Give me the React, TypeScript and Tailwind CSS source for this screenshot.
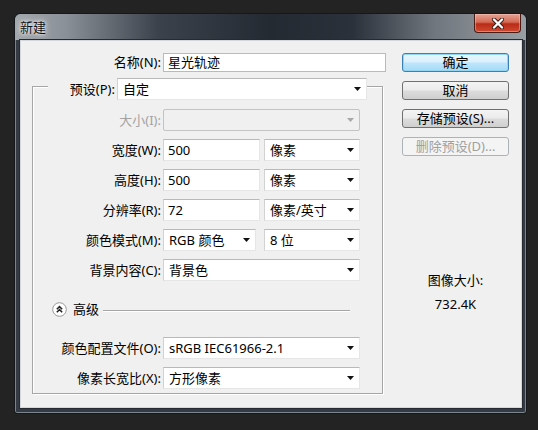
import React from 'react';

function Arrow({ disabled = false }: { disabled?: boolean }) {
  return (
    <svg width="7" height="4" viewBox="0 0 7 4" className="shrink-0">
      <polygon points="0,0 7,0 3.5,4" fill={disabled ? '#a8a8a8' : '#111111'} />
    </svg>
  );
}

function Select({ value, className = '', disabled = false }: { value?: string; className?: string; disabled?: boolean }) {
  return (
    <div
      className={`flex items-center justify-between h-[22px] pl-[5px] pr-[5px] border ${
        disabled
          ? 'bg-[#f0f0f0] border-[#c3c3c3] rounded-[2px]'
          : 'bg-white border-[#e6e6e6] border-t-[#b9b9b9] border-l-[#d2d2d2]'
      } ${className}`}
    >
      <span className="leading-[20px] whitespace-nowrap">{value}</span>
      <Arrow disabled={disabled} />
    </div>
  );
}

function Field({ value, className = '' }: { value: string; className?: string }) {
  return (
    <div className={`flex items-center h-[22px] pl-[4px] bg-white border border-[#e6e6e6] border-t-[#b9b9b9] border-l-[#d2d2d2] ${className}`}>
      <span className="leading-[20px]">{value}</span>
    </div>
  );
}

function Row({ label, children, disabled = false }: { label: string; children: React.ReactNode; disabled?: boolean }) {
  return (
    <div className="flex items-center h-[22px]">
      <div className={`w-[128px] shrink-0 text-right whitespace-nowrap leading-[22px] ${disabled ? 'text-[#a3a3a3]' : ''}`}>
        {label}
      </div>
      <div className="ml-[2px] flex items-center">{children}</div>
    </div>
  );
}

function Button({ label, primary = false, disabled = false }: { label: string; primary?: boolean; disabled?: boolean }) {
  let cls =
    'border-[#707070] bg-[linear-gradient(to_bottom,#f4f4f4_0%,#ebebeb_48%,#dcdcdc_52%,#cfcfcf_100%)] text-black';
  if (primary)
    cls =
      'border-[#3c7fb1] bg-[linear-gradient(to_bottom,#eaf6fd_0%,#d9f0fc_48%,#bee6fd_52%,#a7d9f5_100%)] text-black shadow-[inset_0_0_0_1px_#8fd6f7]';
  if (disabled) cls = 'border-[#adb2b5] bg-[#f4f4f4] text-[#a0a0a0]';
  return (
    <div className={`h-[19px] w-[107px] rounded-[3px] border flex items-center justify-center leading-[17px] ${cls}`}>
      {label}
    </div>
  );
}

function CollapseIcon() {
  return (
    <svg width="15" height="15" viewBox="0 0 15 15" className="shrink-0">
      <circle cx="7.5" cy="7.5" r="6.8" fill="#ffffff" stroke="#9a9a9a" strokeWidth="1" />
      <path d="M4.8 7.2 L7.5 4.6 L10.2 7.2 M4.8 10.2 L7.5 7.6 L10.2 10.2" fill="none" stroke="#222" strokeWidth="1.5" />
    </svg>
  );
}

export default function App() {
  return (
    <div className="w-[538px] h-[430px] bg-[#232323] overflow-hidden pt-[13px] pl-[14px] font-['Noto_Sans','Noto_Sans_CJK_SC',sans-serif] text-[13px] text-black">
      {/* Window */}
      <div className="w-[513px] h-[401px] flex flex-col rounded-t-[6px] rounded-b-[3px] border border-[#15181b] bg-[#343b44] shadow-[inset_0_0_0_1px_#7d858d]">
        {/* Title bar */}
        <div className="h-[26px] flex items-start justify-between rounded-t-[6px] bg-[linear-gradient(to_right,#a3a8ad_0%,#8a9097_10%,#3b424b_28%,#232a32_50%,#2a313a_66%,#6f767d_82%,#9a9fa4_100%)]">
          <div className="pl-[5px] pt-[4px] leading-[18px] text-[#111] [text-shadow:0_0_6px_#ffffff,0_0_3px_#ffffff]">新建</div>
          <div className="mr-[5px] w-[47px] h-[19px] rounded-b-[4px] border border-t-0 border-[#4a1c16] bg-[linear-gradient(to_bottom,#e6a496_0%,#d46a55_45%,#b92c17_55%,#cf4a31_100%)] shadow-[inset_0_0_0_1px_rgba(255,200,190,0.45)] flex items-center justify-center">
            <svg width="14" height="11" viewBox="0 0 14 11">
              <path d="M3 1.5 L11 9.5 M11 1.5 L3 9.5" stroke="#3a1410" strokeWidth="4" strokeLinecap="round" />
              <path d="M3 1.5 L11 9.5 M11 1.5 L3 9.5" stroke="#ffffff" strokeWidth="2.4" strokeLinecap="round" />
            </svg>
          </div>
        </div>

        {/* Content */}
        <div className="ml-[5px] mr-[4px] h-[368px] flex bg-[#f0f0f0] border border-[#d4d8dc] shadow-[0_0_0_1px_#252b31]">
          {/* Left column */}
          <div className="w-[365px] shrink-0 pl-[11px] pt-[12px] flex flex-col">
            <div className="flex items-center h-[19px]">
              <div className="w-[129px] shrink-0 text-right leading-[19px]">名称(N):</div>
              <div className="ml-[2px] w-[223px] h-[19px] pl-[4px] bg-white border border-[#9fc3d6] flex items-center leading-[17px]">
                星光轨迹
              </div>
            </div>

            <fieldset className="w-[351px] border border-[#a6a6a6] shadow-[1px_1px_0_#ffffff,inset_1px_1px_0_#ffffff] pb-[4px]">
              <legend className="ml-[15px] pt-[6px] flex items-center bg-[#f0f0f0]">
                <div className="w-[67px] text-right leading-[22px] whitespace-nowrap">预设(P):</div>
                <Select value="自定" className="ml-[2px] w-[250px]" />
              </legend>

              <div className="pt-[9px] flex flex-col gap-[8px]">
                <Row label="大小(I):" disabled>
                  <Select disabled className="w-[197px] h-[21px]" />
                </Row>
                <Row label="宽度(W):">
                  <Field value="500" className="w-[97px]" />
                  <Select value="像素" className="ml-[4px] w-[96px]" />
                </Row>
                <Row label="高度(H):">
                  <Field value="500" className="w-[97px]" />
                  <Select value="像素" className="ml-[4px] w-[96px]" />
                </Row>
                <Row label="分辨率(R):">
                  <Field value="72" className="w-[97px]" />
                  <Select value="像素/英寸" className="ml-[4px] w-[96px]" />
                </Row>
                <Row label="颜色模式(M):">
                  <Select value="RGB 颜色" className="w-[93px]" />
                  <Select value="8 位" className="ml-[8px] w-[96px]" />
                </Row>
                <Row label="背景内容(C):">
                  <Select value="背景色" className="w-[197px]" />
                </Row>

                {/* Advanced */}
                <div className="mt-[11px] h-[18px] flex items-center pl-[19px]">
                  <CollapseIcon />
                  <span className="ml-[6px] leading-[18px]">高级</span>
                  <div className="ml-[4px] mt-[3px] w-[247px] h-0 border-t border-[#a6a6a6] shadow-[0_1px_0_#ffffff]" />
                </div>

                <div className="mt-[11px] flex flex-col gap-[8px]">
                  <Row label="颜色配置文件(O):">
                    <Select value="sRGB IEC61966-2.1" className="w-[197px]" />
                  </Row>
                  <Row label="像素长宽比(X):">
                    <Select value="方形像素" className="w-[197px]" />
                  </Row>
                </div>
              </div>
            </fieldset>
          </div>

          {/* Right column */}
          <div className="ml-[16px] pt-[12px] w-[107px] flex flex-col gap-[9px]">
            <Button label="确定" primary />
            <Button label="取消" />
            <Button label="存储预设(S)..." />
            <Button label="删除预设(D)..." disabled />

            <div className="mt-[106px] flex flex-col items-center">
              <div className="leading-[18px]">图像大小:</div>
              <div className="mt-[6px] leading-[18px]">732.4K</div>
            </div>
          </div>
        </div>
      </div>
    </div>
  );
}
